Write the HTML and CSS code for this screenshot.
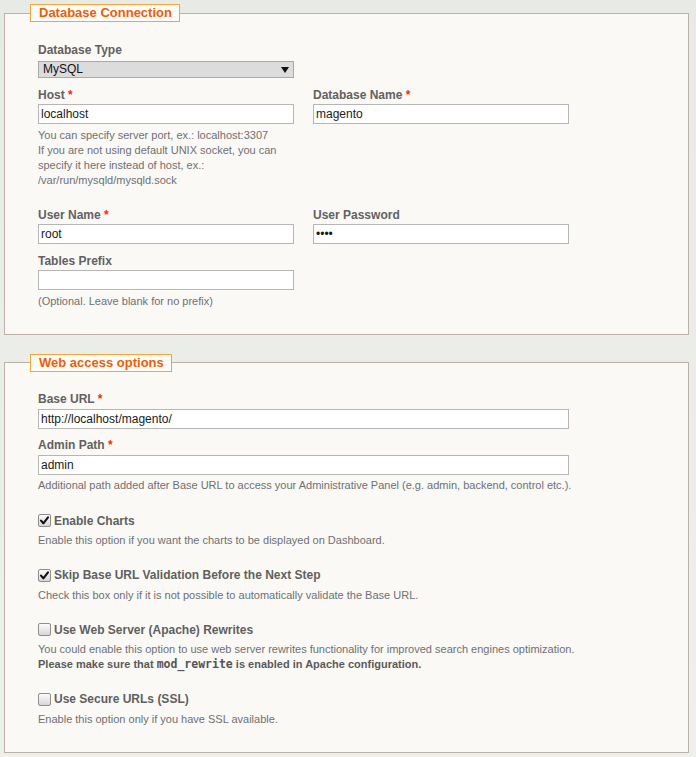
FILE: index.html
```html
<!DOCTYPE html>
<html lang="en">
<head>
<meta charset="utf-8">
<title>Configuration</title>
<link rel="stylesheet" href="styles.css">
</head>
<body>
<form class="setup">
  <fieldset class="group">
    <legend class="group-title">Database Connection</legend>
    <div class="group-body">
      <div class="field field-select">
        <label class="field-label">Database Type</label>
        <div class="select-wrap">
          <select class="select"><option>MySQL</option></select>
          <svg class="select-arrow" width="8" height="6" viewBox="0 0 8 6"><path d="M0 0H8L4 6Z" fill="#111"/></svg>
        </div>
      </div>

      <div class="row row-tall">
        <div class="field">
          <label class="field-label">Host <em class="req">*</em></label>
          <input class="text" type="text" value="localhost">
          <p class="note">You can specify server port, ex.: localhost:3307<br>If you are not using default UNIX socket, you can specify it here instead of host, ex.: /var/run/mysqld/mysqld.sock</p>
        </div>
        <div class="field">
          <label class="field-label">Database Name <em class="req">*</em></label>
          <input class="text" type="text" value="magento">
        </div>
      </div>

      <div class="row">
        <div class="field">
          <label class="field-label">User Name <em class="req">*</em></label>
          <input class="text" type="text" value="root">
        </div>
        <div class="field">
          <label class="field-label">User Password</label>
          <input class="text" type="password" value="root">
        </div>
      </div>

      <div class="row">
        <div class="field">
          <label class="field-label">Tables Prefix</label>
          <input class="text" type="text" value="">
          <p class="note">(Optional. Leave blank for no prefix)</p>
        </div>
      </div>
    </div>
  </fieldset>

  <fieldset class="group">
    <legend class="group-title">Web access options</legend>
    <div class="group-body">
      <div class="field">
        <label class="field-label">Base URL <em class="req">*</em></label>
        <input class="text text-wide" type="text" value="http://localhost/magento/">
      </div>
      <div class="field field-next">
        <label class="field-label">Admin Path <em class="req">*</em></label>
        <input class="text text-wide" type="text" value="admin">
        <p class="note">Additional path added after Base URL to access your Administrative Panel (e.g. admin, backend, control etc.).</p>
      </div>

      <div class="option">
        <label class="option-label">
          <span class="check"><svg width="11" height="11" viewBox="0 0 11 11"><path d="M2 5.6 4.4 8.3 9 2.4" fill="none" stroke="#111" stroke-width="2.1" stroke-linecap="round" stroke-linejoin="round"/></svg></span>
          Enable Charts
        </label>
        <p class="note note-option">Enable this option if you want the charts to be displayed on Dashboard.</p>
      </div>

      <div class="option">
        <label class="option-label">
          <span class="check"><svg width="11" height="11" viewBox="0 0 11 11"><path d="M2 5.6 4.4 8.3 9 2.4" fill="none" stroke="#111" stroke-width="2.1" stroke-linecap="round" stroke-linejoin="round"/></svg></span>
          Skip Base URL Validation Before the Next Step
        </label>
        <p class="note note-option">Check this box only if it is not possible to automatically validate the Base URL.</p>
      </div>

      <div class="option">
        <label class="option-label">
          <span class="check"></span>
          Use Web Server (Apache) Rewrites
        </label>
        <p class="note note-option">You could enable this option to use web server rewrites functionality for improved search engines optimization.<br><strong>Please make sure that <code>mod_rewrite</code> is enabled in Apache configuration.</strong></p>
      </div>

      <div class="option">
        <label class="option-label">
          <span class="check"></span>
          Use Secure URLs (SSL)
        </label>
        <p class="note note-option">Enable this option only if you have SSL available.</p>
      </div>
    </div>
  </fieldset>
</form>
</body>
</html>
```

FILE: styles.css
```css
html, body {
  margin: 0;
  padding: 0;
}

body {
  background: linear-gradient(180deg, #e8eae5 0%, #eef0eb 100%);
  font-family: "Liberation Sans", Arial, sans-serif;
  font-size: 12px;
  color: #616161;
}

.setup {
  padding: 4px 7px 0 4px;
}

/* Section boxes */
.group {
  margin: 0 0 19px 0;
  padding: 0;
  min-width: 0;
  border: 1px solid #bcb1a2;
  background: #faf9f6;
}

.group-title {
  margin-left: 25px;
  padding: 0 7px 0 8px;
  border: 1px solid #f3a43a;
  background: #fcfbf6;
  color: #ea5f0b;
  font-weight: bold;
  font-size: 13px;
  line-height: 16px;
}

.group-body {
  padding: 20.5px 0 25px 33px;
}

/* Fields */
.row {
  display: grid;
  grid-template-columns: 256px 256px;
  column-gap: 19px;
  margin-top: 9.5px;
}

.row-tall {
  padding-bottom: 10.5px;
}

.field-next {
  margin-top: 9.5px;
}

.field-label {
  display: block;
  font-weight: bold;
  line-height: 15px;
  margin-bottom: 1.5px;
  color: #616161;
}

.field-select .field-label {
  margin-bottom: 3.5px;
}

.req {
  font-style: normal;
  color: #eb2f0a;
}

.text {
  display: block;
  box-sizing: border-box;
  width: 256px;
  height: 20px;
  margin: 0;
  padding: 0 2px;
  border: 1px solid #b6b6b6;
  background: #fff;
  font-family: "Liberation Sans", Arial, sans-serif;
  font-size: 12px;
  color: #1a1a1a;
  outline: none;
}

.text-wide {
  width: 531px;
}

.select-wrap {
  position: relative;
  width: 256px;
}

.select {
  display: block;
  box-sizing: border-box;
  width: 256px;
  height: 17px;
  margin: 0;
  padding: 0 4px;
  border: 1px solid #a9a9a9;
  border-radius: 0;
  background: #dcdcdc;
  -webkit-appearance: none;
  appearance: none;
  font-family: "Liberation Sans", Arial, sans-serif;
  font-size: 12px;
  line-height: 15px;
  color: #111;
}

.select-arrow {
  position: absolute;
  right: 5px;
  top: 6px;
  pointer-events: none;
}

.note {
  margin: 3.5px 0 0 0;
  font-size: 11px;
  line-height: 15px;
  color: #6f7073;
}

.note strong {
  color: #5a5a5a;
}

.note code {
  font-family: "DejaVu Sans Mono", "Liberation Mono", monospace;
  font-size: 11.5px;
  font-weight: bold;
  color: #555;
}

/* Checkbox options */
.option {
  margin-top: 19.5px;
}

.field-next + .option {
  margin-top: 20px;
}

.option-label {
  display: flex;
  align-items: center;
  gap: 3px;
  height: 15px;
  font-weight: bold;
  color: #5f5f5f;
}

.check {
  box-sizing: border-box;
  flex: none;
  display: flex;
  align-items: center;
  justify-content: center;
  width: 13px;
  height: 13px;
  border: 1px solid #8e8e8e;
  border-radius: 2px;
  background: linear-gradient(180deg, #fbfbfb 0%, #e6e6e6 60%, #d6d6d6 100%);
}

.note-option {
  margin-top: 5px;
}
```
